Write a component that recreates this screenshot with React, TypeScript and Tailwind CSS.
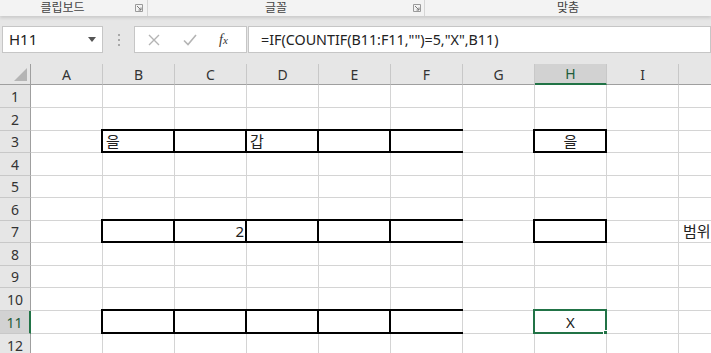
import { ReactNode } from "react";

const COLS = ["A", "B", "C", "D", "E", "F", "G", "H", "I", "J"];
// row height incl. bottom gridline
const ROW_H = [
  "h-[23px]",
  "h-[23px]",
  "h-[22px]",
  "h-[23px]",
  "h-[22px]",
  "h-[23px]",
  "h-[22px]",
  "h-[23px]",
  "h-[22px]",
  "h-[23px]",
  "h-[23px]",
  "h-[23px]",
];

type Box = "full" | "open" | "sel" | undefined;

const boxAt = (row: number, col: number): Box => {
  if (row === 3 || row === 7 || row === 11) {
    if (col >= 1 && col <= 4) return "full";
    if (col === 5) return "open";
    if (col === 7) return row === 11 ? "sel" : "full";
  }
  return undefined;
};

const textAt = (row: number, col: number): ReactNode => {
  if (row === 3 && col === 1) return <span className="pl-[3px]">을</span>;
  if (row === 3 && col === 3) return <span className="pl-[3px]">갑</span>;
  if (row === 3 && col === 7)
    return <span className="w-full text-center">을</span>;
  if (row === 7 && col === 2)
    return <span className="w-full pr-[2px] text-right">2</span>;
  if (row === 7 && col === 9)
    return <span className="pl-[4px] whitespace-nowrap">범위</span>;
  if (row === 11 && col === 7)
    return <span className="w-full text-center">X</span>;
  return null;
};

const Cell: React.FC<{ row: number; col: number }> = ({ row, col }) => {
  const box = boxAt(row, col);
  return (
    <div className="relative flex h-full w-[72px] shrink-0 items-center border-r border-b border-[#d4d4d4] bg-white">
      {textAt(row, col)}
      {box === "full" && (
        <div className="pointer-events-none absolute -top-[2px] -left-[2px] right-[-1px] bottom-[-1px] border-2 border-black"></div>
      )}
      {box === "open" && (
        <div className="pointer-events-none absolute -top-[2px] -left-[2px] right-[-1px] bottom-[-1px] border-2 border-r-0 border-black"></div>
      )}
      {box === "sel" && (
        <>
          <div className="pointer-events-none absolute -top-[2px] -left-[2px] right-[-1px] bottom-[-1px] border-2 border-[#217346]"></div>
          <div className="absolute right-[-4px] bottom-[-4px] h-[7px] w-[7px] border border-white bg-[#217346]"></div>
        </>
      )}
    </div>
  );
};

const RibbonLauncher = () => (
  <svg width="8" height="8" viewBox="0 0 8 8" className="mt-[4px]">
    <path d="M0.5 0.5H7.5V7.5H0.5Z" fill="none" stroke="#9a9a9a" />
    <path d="M2 2L6 6M6 3.5V6H3.5" fill="none" stroke="#7a7a7a" />
  </svg>
);

export default function App() {
  return (
    <div
      className="relative h-[353px] w-[711px] overflow-hidden bg-[#e6e6e6] text-[#222]"
      style={{ fontFamily: '"Noto Sans", "Noto Sans CJK KR", sans-serif' }}
    >
      {/* ribbon group labels */}
      <div className="flex h-[16px] items-start bg-[#f3f3f3] text-[12px] leading-[15px] text-[#444] shadow-[0_2px_3px_rgba(0,0,0,0.12)]">
        <div className="flex w-[148px] shrink-0 items-start">
          <div className="w-[126px] text-center">클립보드</div>
          <div className="ml-[10px]">
            <RibbonLauncher />
          </div>
          <div className="ml-[4px] h-[16px] w-px bg-[#d6d6d6]"></div>
        </div>
        <div className="flex w-[277px] shrink-0 items-start">
          <div className="w-[256px] text-center">글꼴</div>
          <div className="ml-[9px]">
            <RibbonLauncher />
          </div>
          <div className="ml-[3px] h-[16px] w-px bg-[#d6d6d6]"></div>
        </div>
        <div className="w-[294px] text-center">맞춤</div>
      </div>

      {/* formula bar */}
      <div className="mt-[10px] flex h-[27px] items-stretch text-[15px]">
        <div className="ml-[2px] flex w-[101px] items-center border border-[#c6c6c6] bg-white">
          <span className="pl-[6px] text-[#222]">H11</span>
          <svg width="8" height="5" viewBox="0 0 8 5" className="ml-auto mr-[6px]">
            <path d="M0 0H8L4 5Z" fill="#555" />
          </svg>
        </div>
        <div className="flex w-[31px] flex-col items-center justify-center gap-[3px]">
          <div className="h-[2px] w-[2px] bg-[#a8a8a8]"></div>
          <div className="h-[2px] w-[2px] bg-[#a8a8a8]"></div>
          <div className="h-[2px] w-[2px] bg-[#a8a8a8]"></div>
        </div>
        <div className="flex w-[113px] items-center border border-[#c6c6c6] bg-white">
          <svg width="12" height="12" viewBox="0 0 12 12" className="ml-[13px]">
            <path d="M1 1L11 11M11 1L1 11" stroke="#b4b4b4" strokeWidth="1.4" />
          </svg>
          <svg width="14" height="12" viewBox="0 0 14 12" className="ml-[23px]">
            <path d="M1 6.5L5 10.5L13 1" fill="none" stroke="#b4b4b4" strokeWidth="1.6" />
          </svg>
          <span
            className="ml-[22px] text-[14px] italic text-[#333]"
            style={{ fontFamily: '"Liberation Serif", serif' }}
          >
            f<span className="text-[11px]">x</span>
          </span>
        </div>
        <div className="ml-[1px] flex flex-1 items-center border border-[#c6c6c6] bg-white">
          <span className="pl-[12px] text-[14.3px] text-[#222]">=IF(COUNTIF(B11:F11,"")=5,"X",B11)</span>
        </div>
      </div>

      {/* sheet */}
      <div className="mt-[11px] text-[15px]">
        <div className="flex h-[21px]">
          <div className="relative h-full w-[31px] shrink-0 border-r border-b border-[#9f9f9f] bg-[#e6e6e6]">
            <svg width="13" height="13" viewBox="0 0 13 13" className="absolute right-[3px] bottom-[3px]">
              <path d="M13 0V13H0Z" fill="#b5b5b5" />
            </svg>
          </div>
          {COLS.map((c, i) => (
            <div
              key={c}
              className={`flex h-full w-[72px] shrink-0 items-center justify-center border-r border-[#c8c8c8] ${
                i === 7
                  ? "border-b-2 border-b-[#217346] bg-[#d2d2d2] text-[#1e5c3a]"
                  : "border-b border-b-[#9f9f9f] bg-[#e6e6e6] text-[#333]"
              }`}
            >
              {/* J sits past the right edge of the window */}
              {c !== "J" && <span className="text-[14px]">{c}</span>}
            </div>
          ))}
        </div>
        {ROW_H.map((h, r) => {
          const row = r + 1;
          return (
            <div key={row} className={`flex ${h}`}>
              <div
                className={`flex h-full w-[31px] shrink-0 items-center justify-center border-b border-[#c8c8c8] text-[14px] ${
                  row === 11
                    ? "border-r-2 border-r-[#217346] bg-[#d2d2d2] text-[#1e5c3a]"
                    : "border-r border-r-[#9f9f9f] bg-[#e6e6e6] text-[#333]"
                }`}
              >
                {row}
              </div>
              {COLS.map((c, i) => (
                <Cell key={c} row={row} col={i} />
              ))}
            </div>
          );
        })}
      </div>
    </div>
  );
}
